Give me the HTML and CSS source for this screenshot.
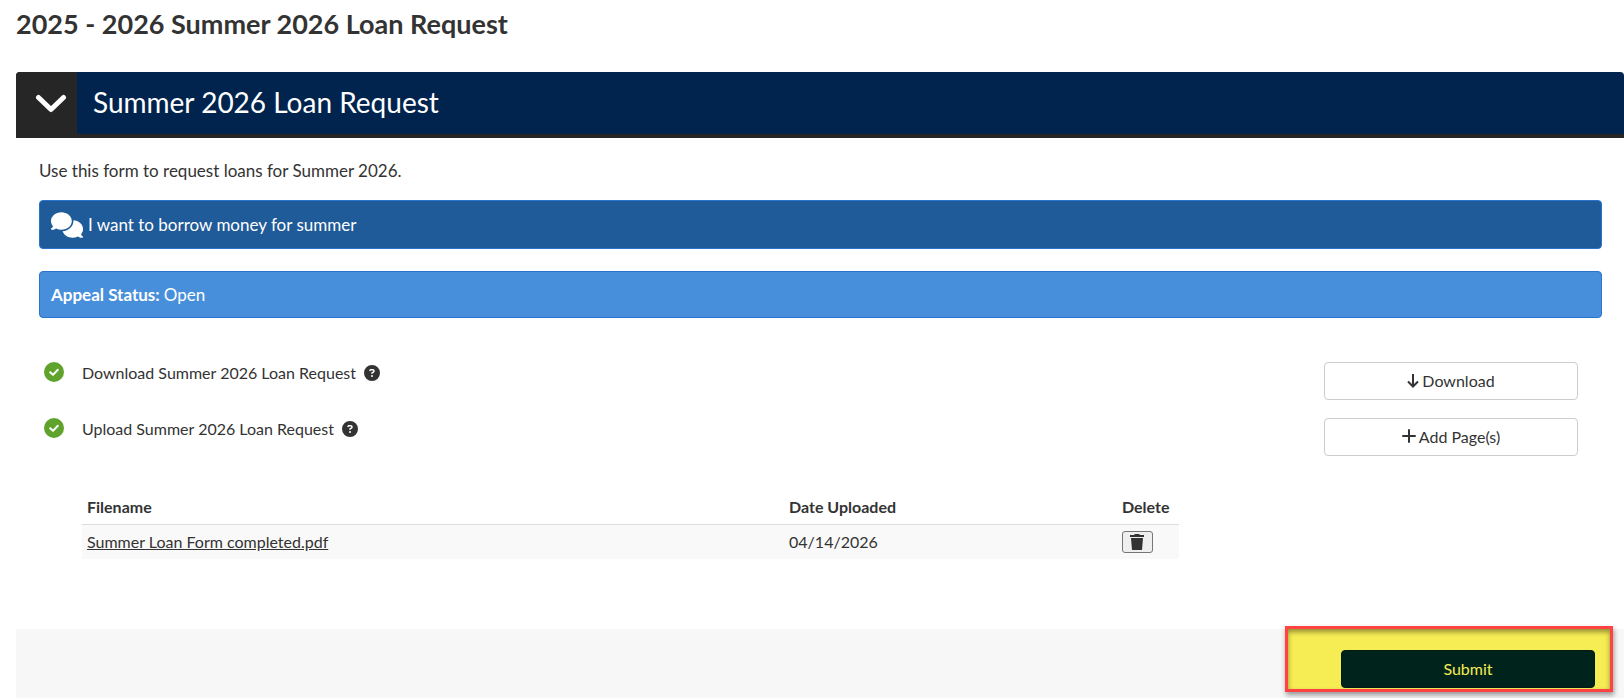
FILE: index.html
```
<!DOCTYPE html>
<html lang="en">
<head>
    <meta charset="UTF-8">
    <meta name="viewport" content="width=device-width, initial-scale=1.0">
    <title>Summer 2026 Loan Request</title>
    <link rel="stylesheet" href="styles.css">
</head>
<body>
    <h1 class="page-title">2025 - 2026 Summer 2026 Loan Request</h1>

    <div class="panel">
        <div class="panel-heading">
            <button class="panel-toggle" type="button" aria-label="Collapse section">
                <svg class="icon-chevron" viewBox="0 0 32 20" aria-hidden="true"><path d="M3.500 3.500L16 15.500L28.500 3.500" fill="none" stroke="currentColor" stroke-width="5" stroke-linecap="round" stroke-linejoin="round"/></svg>
            </button>
            <h2 class="panel-title">Summer 2026 Loan Request</h2>
        </div>

        <div class="panel-body">
            <p class="intro">Use this form to request loans for Summer 2026.</p>

            <div class="alert alert-message">
                <svg class="icon-comments" viewBox="0 0 640 512" aria-hidden="true"><path fill="currentColor" d="M208 352c114.900 0 208-78.800 208-176S322.900 0 208 0S0 78.800 0 176c0 38.600 14.700 74.300 39.600 103.400c-3.500 9.400-8.700 17.700-14.200 24.700c-4.800 6.200-9.700 11-13.300 14.300c-1.800 1.600-3.300 2.900-4.300 3.700C.9 327.200-1.500 334.500.9 341S9 352 16 352c21.800 0 43.800-5.600 62.100-12.500c9.200-3.500 17.800-7.400 25.300-11.400C134.100 343.300 169.800 352 208 352zM448 176c0 112.300-99.100 196.900-216.500 207C255.800 457.400 336.400 512 432 512c38.200 0 73.900-8.700 104.700-23.900c7.500 4 16 7.900 25.200 11.400c18.300 6.900 40.300 12.500 62.100 12.500c6.900 0 13.100-4.500 15.200-11.100s-.2-13.800-5.800-17.900c-.9-.8-2.400-2.100-4.200-3.700c-3.600-3.300-8.500-8.100-13.300-14.300c-5.500-7-10.700-15.400-14.200-24.700c24.900-29 39.600-64.700 39.600-103.400c0-92.800-84.900-168.900-192.600-175.500c.4 5.100.6 10.300.6 15.500z"/></svg>
                <span>I want to borrow money for summer</span>
            </div>

            <div class="alert alert-status"><strong>Appeal Status:</strong> Open</div>

            <div class="task">
                <svg class="icon-check" viewBox="0 0 20 20" role="img" aria-label="Complete"><circle cx="10" cy="10" r="10" fill="#5fa32d"/><path d="M6.200 10.200L9 12.900L13.800 7.700" fill="none" stroke="#fff" stroke-width="2" stroke-linecap="round" stroke-linejoin="round"/></svg>
                <div class="task-label">
                    Download Summer 2026 Loan Request
                    <button class="help" type="button" aria-label="Help with download">
                        <svg viewBox="0 0 512 512" aria-hidden="true"><path fill="currentColor" d="M256 512A256 256 0 1 0 256 0a256 256 0 1 0 0 512zM169.800 165.300c7.900-22.300 29.100-37.300 52.800-37.300h58.300c34.900 0 63.100 28.300 63.100 63.100c0 22.600-12.100 43.500-31.700 54.800L280 264.400c-.2 13-10.900 23.600-24 23.600c-13.300 0-24-10.700-24-24V250.500c0-8.600 4.600-16.500 12.100-20.800l44.300-25.400c4.700-2.700 7.600-7.700 7.600-13.100c0-8.400-6.800-15.100-15.100-15.100H222.600c-3.400 0-6.400 2.100-7.500 5.300l-.4 1.200c-4.400 12.500-18.200 19-30.600 14.600s-19-18.200-14.600-30.600l.3-1.300zM224 352a32 32 0 1 1 64 0a32 32 0 1 1-64 0z"/></svg>
                    </button>
                </div>
                <button class="btn btn-default" type="button">
                    <svg class="icon-arrow" viewBox="0 0 12 15" aria-hidden="true"><path d="M6 1V13.500M1 8.500L6 13.500L11 8.500" fill="none" stroke="currentColor" stroke-width="2"/></svg>Download
                </button>
            </div>

            <div class="task">
                <svg class="icon-check" viewBox="0 0 20 20" role="img" aria-label="Complete"><circle cx="10" cy="10" r="10" fill="#5fa32d"/><path d="M6.200 10.200L9 12.900L13.800 7.700" fill="none" stroke="#fff" stroke-width="2" stroke-linecap="round" stroke-linejoin="round"/></svg>
                <div class="task-label">
                    Upload Summer 2026 Loan Request
                    <button class="help" type="button" aria-label="Help with upload">
                        <svg viewBox="0 0 512 512" aria-hidden="true"><path fill="currentColor" d="M256 512A256 256 0 1 0 256 0a256 256 0 1 0 0 512zM169.800 165.300c7.900-22.300 29.100-37.300 52.800-37.300h58.300c34.900 0 63.100 28.300 63.100 63.100c0 22.600-12.100 43.500-31.700 54.800L280 264.400c-.2 13-10.900 23.600-24 23.600c-13.300 0-24-10.700-24-24V250.500c0-8.600 4.600-16.500 12.100-20.800l44.300-25.400c4.700-2.700 7.600-7.700 7.600-13.100c0-8.400-6.800-15.100-15.100-15.100H222.600c-3.400 0-6.400 2.100-7.500 5.300l-.4 1.200c-4.400 12.500-18.200 19-30.600 14.600s-19-18.200-14.600-30.600l.3-1.300zM224 352a32 32 0 1 1 64 0a32 32 0 1 1-64 0z"/></svg>
                    </button>
                </div>
                <button class="btn btn-default" type="button">
                    <svg class="icon-plus" viewBox="0 0 14 14" aria-hidden="true"><path d="M7 1V13M1 7H13" fill="none" stroke="currentColor" stroke-width="2" stroke-linecap="round"/></svg>Add Page(s)
                </button>
            </div>

            <table class="files">
                <thead>
                    <tr>
                        <th class="col-name">Filename</th>
                        <th>Date Uploaded</th>
                        <th class="col-delete">Delete</th>
                    </tr>
                </thead>
                <tbody>
                    <tr>
                        <td><a href="#">Summer Loan Form completed.pdf</a></td>
                        <td>04/14/2026</td>
                        <td>
                            <button class="btn-delete" type="button" aria-label="Delete file">
                                <svg viewBox="0 0 14 16" aria-hidden="true"><path fill="currentColor" d="M0 1H4L5 0H9L10 1H14V3H0ZM1 4H13L12 16H2Z"/></svg>
                            </button>
                        </td>
                    </tr>
                </tbody>
            </table>
        </div>

        <div class="panel-footer">
            <div class="highlight">
                <button class="btn btn-submit" type="submit">Submit</button>
            </div>
        </div>
    </div>
</body>
</html>
```
FILE: styles.css
```
* {
    box-sizing: border-box;
}

body {
    font-family: Lato, 'Liberation Sans', sans-serif;
    font-size: 16px;
    line-height: 22px;
    margin: 0;
    padding-left: 16px;
    background: white;
    color: #333;
}

svg {
    display: block;
    flex: none;
}

button {
    font-family: inherit;
    color: inherit;
    cursor: pointer;
}

.page-title {
    margin: 0;
    padding: 8px 0 32px;
    font-size: 27px;
    line-height: 32px;
    font-weight: bold;
}

.panel-heading {
    display: flex;
    background: #00244d;
    color: white;
    border-bottom: 4px solid #262626;
    border-radius: 4px 4px 0 0;
    overflow: hidden;
}

.panel-toggle {
    display: flex;
    align-items: center;
    justify-content: center;
    width: 61px;
    padding: 2px 0 0 8px;
    border: none;
    background: #262626;
}

.icon-chevron {
    width: 32px;
    height: 20px;
}

.panel-title {
    margin: 0;
    padding: 12px 16px 14px;
    font-size: 28px;
    line-height: 36px;
    font-weight: normal;
}

.panel-body {
    padding: 22px 22px 70px 23px;
}

.intro {
    margin: 0 0 18px;
    font-size: 17px;
}

.alert {
    display: flex;
    align-items: center;
    gap: 5px;
    margin-bottom: 22px;
    padding: 10px 11px;
    border: 1px solid #2a75cb;
    border-radius: 4px;
    color: white;
    font-size: 17px;
    line-height: 27px;
}

.alert-message { background: #1f5a99; }
.alert-status { background: #478fdb; gap: 4px; line-height: 25px; }

.icon-comments {
    width: 32px;
    height: 26px;
}

.task {
    display: flex;
    align-items: flex-start;
    margin: 0 24px 18px 5px;
}

.alert-status + .task {
    margin-top: 44px;
}

.icon-check {
    width: 20px;
    height: 20px;
}

.task-label {
    display: flex;
    flex: 1;
    gap: 8px;
    padding-left: 18px;
}

.help {
    display: flex;
    align-items: center;
    padding: 0;
    border: none;
    background: none;
}

.help svg {
    width: 16px;
    height: 16px;
}

.btn {
    display: flex;
    align-items: center;
    justify-content: center;
    width: 254px;
    height: 38px;
    padding: 0 6px 2px;
    border-radius: 4px;
    font-size: 16px;
}

.btn-default { background: white; border: 1px solid #ccc; gap: 3px; }
.btn-submit { background: #00241c; border: 1px solid #001a14; color: #f6ec54; }

.icon-arrow {
    width: 12px;
    height: 15px;
}

.icon-plus {
    width: 14px;
    height: 14px;
}

.files {
    width: calc(73% - 44px);
    margin: 34px 0 0 43px;
    border-collapse: collapse;
    table-layout: fixed;
}

.files th, .files td {
    padding: 6px 5px;
    text-align: left;
}

.files th { border-bottom: 1px solid #ddd; }
.files td { background: #f9f9f9; }

.col-name { width: 64%; }
.col-delete { width: 62px; }

.files a { color: inherit; }

.btn-delete {
    display: flex;
    align-items: center;
    justify-content: center;
    width: 31px;
    height: 22px;
    padding: 0;
    border: 1px solid #767676;
    border-radius: 3px;
    background: #efefef;
}

.btn-delete svg {
    width: 14px;
    height: 16px;
}

.panel-footer {
    display: flex;
    justify-content: flex-end;
    padding: 0 11px 6px;
    background: #f7f7f7;
}

/* frame sits slightly above the footer edge */
.highlight {
    margin-top: -3px;
    padding: 21px 15px 1px 53px;
    border: 3px solid #ff4343;
    background: #f6ec54;
    box-shadow: 1px 3px 5px rgba(0, 0, 0, 0.4), inset 0 3px 5px rgba(0, 0, 0, 0.4);
}
```
